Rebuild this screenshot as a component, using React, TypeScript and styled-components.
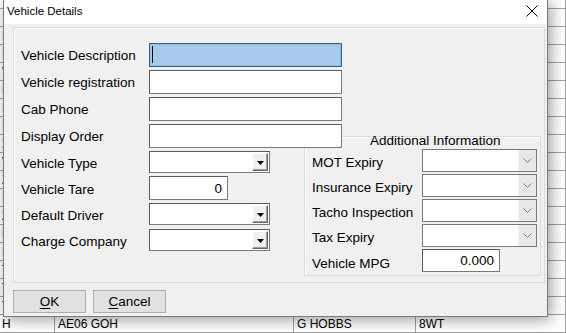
import React from 'react'
import styled, { createGlobalStyle } from 'styled-components'

const UI_FONT = `'Liberation Sans', Arial, sans-serif`

const GlobalStyle = createGlobalStyle`
  html, body {
    margin: 0;
    padding: 0;
    background: #ffffff;
    overflow: hidden;
  }
`

type GridRow = { code: string; reg: string; driver: string; extra: string }

const CODES = ['', '', 'I', 'I', 'V', 'F', 'I', 'I', 'X', 'V', 'Z', 'I', 'Z', 'D', 'I', 'T', 'T', 'T']

const ROWS: GridRow[] = [
  ...CODES.map((code) => ({ code, reg: '', driver: '', extra: '' })),
  { code: 'H', reg: 'AE06 GOH', driver: 'G HOBBS', extra: '8WT' },
]

const LEFT_FIELDS = [
  { label: 'Vehicle Description', kind: 'focus' },
  { label: 'Vehicle registration', kind: 'text' },
  { label: 'Cab Phone', kind: 'text' },
  { label: 'Display Order', kind: 'text' },
  { label: 'Vehicle Type', kind: 'combo' },
  { label: 'Vehicle Tare', kind: 'number', value: '0' },
  { label: 'Default Driver', kind: 'combo' },
  { label: 'Charge Company', kind: 'combo' },
]

const RIGHT_FIELDS = [
  { label: 'MOT Expiry', kind: 'date' },
  { label: 'Insurance Expiry', kind: 'date' },
  { label: 'Tacho Inspection', kind: 'date' },
  { label: 'Tax Expiry', kind: 'date' },
  { label: 'Vehicle MPG', kind: 'number', value: '0.000' },
]

const TriangleDown = () => (
  <svg width="7" height="4" viewBox="0 0 7 4">
    <path d="M0 0h7L3.5 4z" fill="#000" />
  </svg>
)

const Chevron = () => (
  <svg width="9" height="5" viewBox="0 0 9 5">
    <polyline points="0.5,0.5 4.5,4.5 8.5,0.5" fill="none" stroke="#7a7a7a" strokeWidth="1" />
  </svg>
)

const CloseIcon = () => (
  <svg width="12" height="12" viewBox="0 0 12 12">
    <path d="M0.5 0.5L11.5 11.5M11.5 0.5L0.5 11.5" stroke="#000" strokeWidth="1" />
  </svg>
)

const App = () => {
  return (
    <>
      <GlobalStyle />
      <Desktop>
        <Table>
          {ROWS.map((row, i) => (
            <TableRow key={i}>
              <Cell>{row.code}</Cell>
              <Cell>{row.reg}</Cell>
              <Cell>{row.driver}</Cell>
              <Cell>{row.extra}</Cell>
            </TableRow>
          ))}
        </Table>

        <Dialog>
          <TitleBar>
            <Caption>Vehicle Details</Caption>
            <CloseButton>
              <CloseIcon />
            </CloseButton>
          </TitleBar>

          <Body>
            <Panel>
              <FormGrid>
                {LEFT_FIELDS.map((f, i) => (
                  <React.Fragment key={f.label}>
                    <Label $row={i + 1} $drop={f.kind === 'combo' || f.kind === 'number' ? 3 : 1}>
                      {f.label}
                    </Label>
                    {f.kind === 'focus' && (
                      <FocusBox $row={i + 1}>
                        <Caret />
                      </FocusBox>
                    )}
                    {f.kind === 'text' && <TextBox $row={i + 1} />}
                    {f.kind === 'number' && <NumberBox $row={i + 1}>{f.value}</NumberBox>}
                    {f.kind === 'combo' && (
                      <ClassicCombo $row={i + 1}>
                        <ComboButton>
                          <TriangleDown />
                        </ComboButton>
                      </ClassicCombo>
                    )}
                  </React.Fragment>
                ))}

                <GroupBox>
                  <GroupTitle>Additional Information</GroupTitle>
                  <GroupGrid>
                    {RIGHT_FIELDS.map((f) => (
                      <React.Fragment key={f.label}>
                        <GroupLabel $drop={f.kind === 'number' ? 5 : 3}>{f.label}</GroupLabel>
                        {f.kind === 'date' ? (
                          <DateCombo>
                            <DateArrow>
                              <Chevron />
                            </DateArrow>
                          </DateCombo>
                        ) : (
                          <MpgBox>{f.value}</MpgBox>
                        )}
                      </React.Fragment>
                    ))}
                  </GroupGrid>
                </GroupBox>
              </FormGrid>
            </Panel>

            <ButtonRow>
              <Button>
                <u>O</u>K
              </Button>
              <Button>
                <u>C</u>ancel
              </Button>
            </ButtonRow>
          </Body>
        </Dialog>
      </Desktop>
    </>
  )
}

export default App

const Desktop = styled.div`
  position: relative;
  width: 566px;
  height: 333px;
  overflow: hidden;
  background: #ffffff;
  font-family: ${UI_FONT};
`

const Table = styled.div`
  display: flex;
  flex-direction: column;
  margin-top: -9px;
`

const TableRow = styled.div`
  display: grid;
  grid-template-columns: 55px 239px 122px 1fr;
  height: 18px;
  box-sizing: border-box;
  border-bottom: 1px solid #a0a0a0;
`

const Cell = styled.div`
  box-sizing: border-box;
  border-right: 1px solid #a0a0a0;
  padding-left: 2px;
  font-size: 12px;
  line-height: 18px;
  color: #000;
  white-space: nowrap;
  overflow: hidden;

  & + & {
    padding-left: 3px;
  }
`

const Dialog = styled.div`
  position: absolute;
  left: 3px;
  top: -1px;
  width: 545px;
  height: 318px;
  box-sizing: border-box;
  border: 1px solid #7a7a7a;
  background: #f0f0f0;
  display: flex;
  flex-direction: column;
  box-shadow: 3px 3px 14px rgba(0, 0, 0, 0.38);
`

const TitleBar = styled.div`
  display: flex;
  align-items: center;
  justify-content: space-between;
  height: 24px;
  background: #ffffff;
  padding-left: 3px;
`

const Caption = styled.span`
  font-size: 11.5px;
  color: #000;
  padding-bottom: 2px;
`

const CloseButton = styled.div`
  display: flex;
  align-items: center;
  justify-content: center;
  width: 30px;
  height: 24px;
  padding-bottom: 2px;
  box-sizing: border-box;
`

const Body = styled.div`
  display: flex;
  flex-direction: column;
  padding: 3px 0 0 9px;
`

const Panel = styled.div`
  width: 532px;
  height: 256px;
  box-sizing: border-box;
  border: 1px solid #dcdcdc;
  box-shadow: inset 1px 1px 0 #ffffff;
  padding: 13px 0 0 7px;
`

const FormGrid = styled.div`
  display: grid;
  grid-template-columns: 128px 155px 237px;
  grid-template-rows: repeat(4, 27px) repeat(4, 26px) 23px;
  align-items: center;
`

const Label = styled.span<{ $row: number; $drop: number }>`
  grid-row: ${({ $row }) => $row};
  grid-column: 1;
  padding-top: ${({ $drop }) => $drop}px;
  font-size: 13.5px;
  color: #000;
  white-space: nowrap;
`

const sunken = `
  box-sizing: border-box;
  background: #ffffff;
  border: 1px solid #7a7a7a;
  border-top-color: #5a5a5a;
  border-left-color: #5a5a5a;
`

const TextBox = styled.div<{ $row: number }>`
  ${sunken}
  grid-row: ${({ $row }) => $row};
  grid-column: 2 / span 2;
  justify-self: start;
  width: 193px;
  height: 24px;
  z-index: 1;
`

const FocusBox = styled(TextBox)`
  display: flex;
  align-items: center;
  padding-left: 2px;
  background: #a8c9ee;
  border: 1px solid #2e6480;
  box-shadow: inset 0 0 0 1px #8fc0dc;
`

const Caret = styled.span`
  width: 1px;
  height: 17px;
  background: #000;
`

const NumberBox = styled.div<{ $row: number }>`
  ${sunken}
  grid-row: ${({ $row }) => $row};
  grid-column: 2;
  justify-self: start;
  width: 79px;
  height: 24px;
  display: flex;
  align-items: center;
  justify-content: flex-end;
  padding-right: 5px;
  font-size: 13.5px;
`

const ClassicCombo = styled.div<{ $row: number }>`
  ${sunken}
  grid-row: ${({ $row }) => $row};
  grid-column: 2;
  justify-self: start;
  width: 121px;
  height: 22px;
  display: flex;
  justify-content: flex-end;
  padding: 1px;
`

const ComboButton = styled.div`
  width: 16px;
  box-sizing: border-box;
  display: flex;
  align-items: center;
  justify-content: center;
  padding-top: 1px;
  background: #f0f0f0;
  border: 1px solid;
  border-color: #ffffff #696969 #696969 #ffffff;
  box-shadow: inset -1px -1px 0 #a0a0a0;
`

const GroupBox = styled.div`
  grid-column: 3;
  grid-row: 4 / span 6;
  align-self: stretch;
  margin-top: 14px;
  box-sizing: border-box;
  border: 1px solid #dcdcdc;
  box-shadow: inset 1px 1px 0 #ffffff;
  display: flex;
  flex-direction: column;
`

const GroupTitle = styled.div`
  margin-top: -4px;
  padding-left: 65px;
  height: 15px;
  line-height: 15px;
  font-size: 13.5px;
  color: #000;
`

const GroupGrid = styled.div`
  display: grid;
  grid-template-columns: 110px 115px;
  grid-auto-rows: 25px;
  align-items: center;
  padding-left: 7px;
`

const GroupLabel = styled.span<{ $drop: number }>`
  padding-top: ${({ $drop }) => $drop}px;
  font-size: 13.5px;
  color: #000;
  white-space: nowrap;
`

const DateCombo = styled.div`
  box-sizing: border-box;
  width: 115px;
  height: 23px;
  background: #ffffff;
  border: 1px solid #7a7a7a;
  display: flex;
  justify-content: flex-end;
`

const DateArrow = styled.div`
  width: 17px;
  display: flex;
  align-items: center;
  justify-content: center;
  background: #e8e8e8;
  border-left: 1px solid #f4f4f4;
`

const MpgBox = styled.div`
  ${sunken}
  width: 78px;
  height: 23px;
  display: flex;
  align-items: center;
  justify-content: flex-end;
  padding-right: 5px;
  font-size: 13.5px;
`

const ButtonRow = styled.div`
  display: flex;
  gap: 7px;
  margin-top: 7px;
`

const Button = styled.div`
  box-sizing: border-box;
  width: 73px;
  height: 23px;
  display: flex;
  align-items: center;
  justify-content: center;
  background: #e1e1e1;
  border: 1px solid #adadad;
  font-size: 13.5px;
  color: #000;

  u {
    text-underline-offset: 2px;
  }
`
